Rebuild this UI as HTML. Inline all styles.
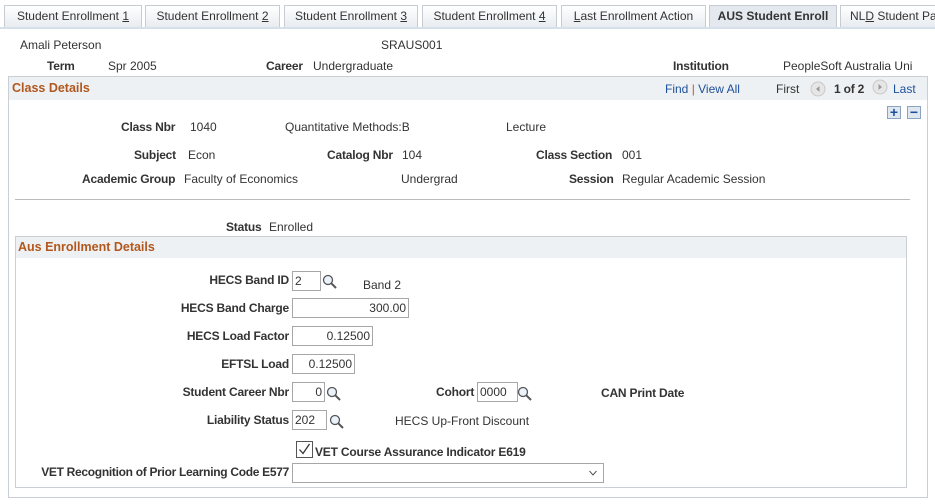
<!DOCTYPE html>
<html><head><meta charset="utf-8"><style>
*{margin:0;padding:0;box-sizing:border-box}
body{width:935px;height:504px;background:#fff;font-family:"Liberation Sans",Arial,sans-serif;font-size:12px;color:#333;position:relative;overflow:hidden}
.a{position:absolute;white-space:nowrap;line-height:14px}
.b{font-weight:bold;letter-spacing:-0.2px}
.r{text-align:right}
.tab{position:absolute;top:5px;height:22px;background:linear-gradient(#fff,#e8ecf0);border:1px solid #c6ccd2;border-bottom:none;font-size:12px;line-height:21px;text-align:center;color:#333}
.tab.act{background:#e3e9ef;font-weight:bold}
.in{position:absolute;height:20px;border:1px solid #a7a7a7;background:#fff;font-size:12px;line-height:18px;padding:0 2px}
.hd{color:#b2571d;font-weight:bold;font-size:12.5px}
.mag{position:absolute;width:16px;height:16px}
.lnk{color:#1e4f9a}
</style></head><body>
<div class="tab" style="left:4px;width:138px">Student Enrollment <u>1</u></div>
<div class="tab" style="left:145px;width:135px">Student Enrollment <u>2</u></div>
<div class="tab" style="left:284px;width:134px">Student Enrollment <u>3</u></div>
<div class="tab" style="left:422px;width:135px">Student Enrollment <u>4</u></div>
<div class="tab" style="left:561px;width:145px"><u>L</u>ast Enrollment Action</div>
<div class="tab act" style="left:709px;width:128px">AUS Student Enroll</div>
<div class="tab" style="left:840px;width:110px;text-align:left;padding-left:9px">NL<u>D</u> Student Pa</div>
<div style="position:absolute;left:0;top:27px;width:935px;height:2px;background:#d5e0ea"></div>

<div class="a" style="left:20px;top:38px">Amali Peterson</div>
<div class="a" style="left:381px;top:38px">SRAUS001</div>
<div class="a b" style="left:47px;top:59px">Term</div>
<div class="a" style="left:108px;top:59px">Spr 2005</div>
<div class="a b" style="left:266px;top:59px">Career</div>
<div class="a" style="left:313px;top:59px">Undergraduate</div>
<div class="a b" style="left:673px;top:59px">Institution</div>
<div class="a" style="left:783px;top:59px">PeopleSoft Australia Uni</div>

<div style="position:absolute;left:8px;top:76px;width:920px;height:422px;border:1px solid #c9cfd4"></div>
<div style="position:absolute;left:9px;top:77px;width:918px;height:23px;background:#eef1f3"></div>
<div class="a hd" style="left:12px;top:81px">Class Details</div>
<div class="a lnk" style="left:665px;top:82px">Find <span style="color:#c0542a">|</span> View All</div>
<div class="a" style="left:776px;top:82px;color:#333">First</div>
<svg class="mag" style="left:810px;top:81px" viewBox="0 0 16 16"><circle cx="8" cy="8" r="7" fill="#e6e6e6" stroke="#c8c8c8"/><path d="M9.5 5 L6 8 L9.5 11Z" fill="#999"/></svg>
<div class="a b" style="left:834px;top:82px">1 of 2</div>
<svg class="mag" style="left:872px;top:79px" viewBox="0 0 16 16"><circle cx="8" cy="8" r="7" fill="#e6e6e6" stroke="#c8c8c8"/><path d="M6.5 5 L10 8 L6.5 11Z" fill="#999"/></svg>
<div class="a lnk" style="left:893px;top:82px">Last</div>
<div style="position:absolute;left:887px;top:106px;width:14px;height:13px;border:1px solid #8aa4c0;background:#dfe8f1;color:#1e4f9a;font-weight:bold;font-size:14px;line-height:11px;text-align:center">+</div>
<div style="position:absolute;left:907px;top:106px;width:14px;height:13px;border:1px solid #8aa4c0;background:#dfe8f1;color:#1e4f9a;font-weight:bold;font-size:14px;line-height:11px;text-align:center">−</div>

<div class="a b" style="left:121px;top:120px">Class Nbr</div>
<div class="a" style="left:190px;top:120px">1040</div>
<div class="a" style="left:285px;top:120px">Quantitative Methods:B</div>
<div class="a" style="left:506px;top:120px">Lecture</div>
<div class="a b" style="left:134px;top:148px">Subject</div>
<div class="a" style="left:188px;top:148px">Econ</div>
<div class="a b" style="left:327px;top:148px">Catalog Nbr</div>
<div class="a" style="left:402px;top:148px">104</div>
<div class="a b" style="left:536px;top:148px">Class Section</div>
<div class="a" style="left:622px;top:148px">001</div>
<div class="a b" style="left:82px;top:172px">Academic Group</div>
<div class="a" style="left:184px;top:172px">Faculty of Economics</div>
<div class="a" style="left:401px;top:172px">Undergrad</div>
<div class="a b" style="left:569px;top:172px">Session</div>
<div class="a" style="left:622px;top:172px">Regular Academic Session</div>
<div style="position:absolute;left:15px;top:199px;width:895px;height:1px;background:#bbb"></div>
<div class="a b" style="left:226px;top:220px">Status</div>
<div class="a" style="left:269px;top:220px">Enrolled</div>

<div style="position:absolute;left:15px;top:236px;width:892px;height:252px;border:1px solid #c9cfd4"></div>
<div style="position:absolute;left:16px;top:237px;width:890px;height:21px;background:#eef1f3"></div>
<div class="a hd" style="left:18px;top:240px">Aus Enrollment Details</div>

<div class="a b r" style="right:646px;top:273px">HECS Band ID</div>
<div class="in" style="left:292px;top:271px;width:29px">2</div>
<svg class="mag" style="left:322px;top:274px" viewBox="0 0 16 16"><circle cx="6" cy="6" r="4.5" fill="#eaf2fb" stroke="#555" stroke-width="1.3"/><path d="M9.3 9.3 L14 14" stroke="#555" stroke-width="2"/></svg>
<div class="a" style="left:363px;top:278px">Band 2</div>
<div class="a b r" style="right:646px;top:301px">HECS Band Charge</div>
<div class="in r" style="left:292px;top:298px;width:117px">300.00</div>
<div class="a b r" style="right:646px;top:329px">HECS Load Factor</div>
<div class="in r" style="left:292px;top:326px;width:81px">0.12500</div>
<div class="a b r" style="right:646px;top:357px">EFTSL Load</div>
<div class="in r" style="left:292px;top:354px;width:63px">0.12500</div>

<div class="a b r" style="right:646px;top:385px">Student Career Nbr</div>
<div class="in r" style="left:292px;top:382px;width:33px">0</div>
<svg class="mag" style="left:326px;top:386px" viewBox="0 0 16 16"><circle cx="6" cy="6" r="4.5" fill="#eaf2fb" stroke="#555" stroke-width="1.3"/><path d="M9.3 9.3 L14 14" stroke="#555" stroke-width="2"/></svg>
<div class="a b" style="left:436px;top:385px">Cohort</div>
<div class="in" style="left:477px;top:382px;width:41px">0000</div>
<svg class="mag" style="left:517px;top:386px" viewBox="0 0 16 16"><circle cx="6" cy="6" r="4.5" fill="#eaf2fb" stroke="#555" stroke-width="1.3"/><path d="M9.3 9.3 L14 14" stroke="#555" stroke-width="2"/></svg>
<div class="a b" style="left:601px;top:386px">CAN Print Date</div>
<div class="a b r" style="right:646px;top:413px">Liability Status</div>
<div class="in" style="left:292px;top:410px;width:35px">202</div>
<svg class="mag" style="left:329px;top:414px" viewBox="0 0 16 16"><circle cx="6" cy="6" r="4.5" fill="#eaf2fb" stroke="#555" stroke-width="1.3"/><path d="M9.3 9.3 L14 14" stroke="#555" stroke-width="2"/></svg>
<div class="a" style="left:395px;top:414px">HECS Up-Front Discount</div>

<svg style="position:absolute;left:296px;top:441px;width:17px;height:17px" viewBox="0 0 17 17"><rect x="0.5" y="0.5" width="16" height="16" fill="#fff" stroke="#555"/><path d="M3.5 8.5 L7 12.5 L13.5 3" stroke="#333" stroke-width="1.3" fill="none"/></svg>
<div class="a b" style="left:315px;top:445px">VET Course Assurance Indicator E619</div>
<div class="a b r" style="right:646px;top:465px;letter-spacing:-0.3px">VET Recognition of Prior Learning Code E577</div>
<div class="in" style="left:292px;top:463px;width:312px"></div>
<svg style="position:absolute;left:588px;top:469px;width:10px;height:8px" viewBox="0 0 10 8"><path d="M1.5 2 L5 6 L8.5 2" stroke="#555" fill="none"/></svg>
</body></html>
